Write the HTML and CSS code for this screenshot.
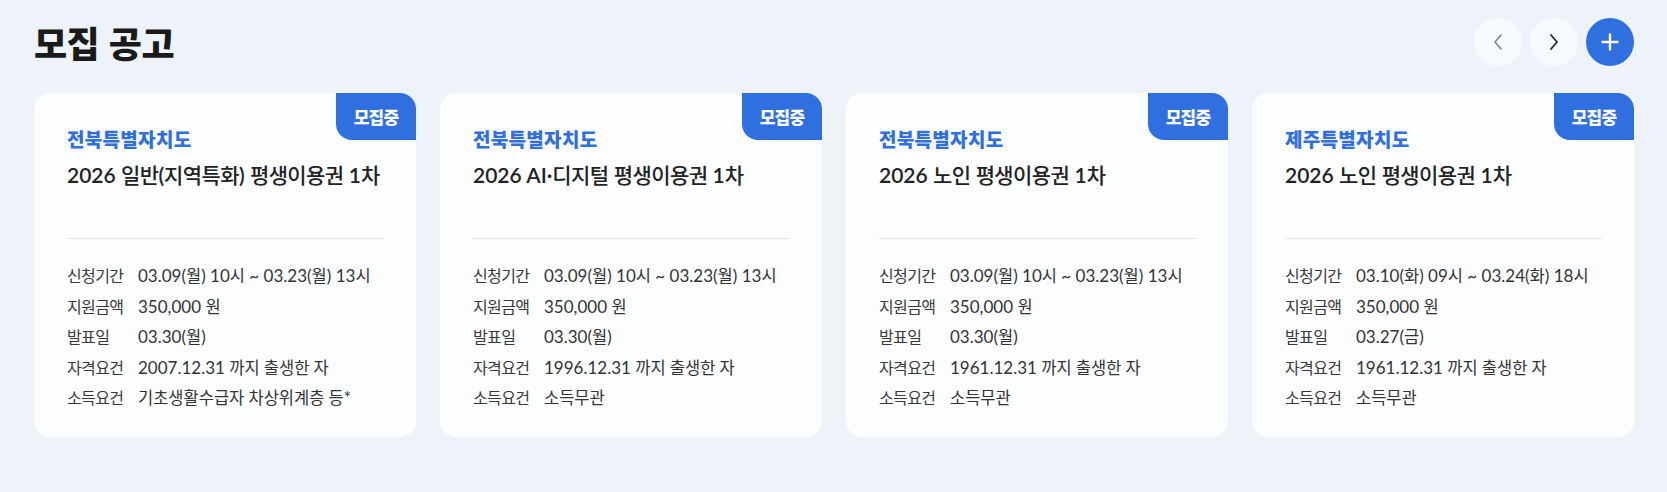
FILE: index.html
```html
<!DOCTYPE html>
<html lang="ko">
<head>
<meta charset="utf-8">
<title>모집 공고</title>
<link rel="stylesheet" href="styles.css">
</head>
<body>
<main class="page">
  <header class="head">
    <h1 class="head-title">모집 공고</h1>
    <div class="head-actions">
      <button class="circle-btn nav-btn is-disabled" aria-label="이전">
        <svg width="14" height="18" viewBox="0 0 14 18"><path d="M10 2 L4 9 L10 16" fill="none" stroke="#80858d" stroke-width="1.6" stroke-linecap="round" stroke-linejoin="round"/></svg>
      </button>
      <button class="circle-btn nav-btn" aria-label="다음">
        <svg width="14" height="18" viewBox="0 0 14 18"><path d="M4 2 L10 9 L4 16" fill="none" stroke="#1e2740" stroke-width="1.8" stroke-linecap="round" stroke-linejoin="round"/></svg>
      </button>
      <button class="circle-btn add-btn" aria-label="추가">
        <svg width="20" height="20" viewBox="0 0 20 20"><path d="M10 2.5 V17.5 M2.5 10 H17.5" fill="none" stroke="#fff" stroke-width="2.4" stroke-linecap="round"/></svg>
      </button>
    </div>
  </header>

  <section class="cards">
    <article class="card">
      <span class="badge">모집중</span>
      <p class="region">전북특별자치도</p>
      <h2 class="card-title">2026 <span class="k">일반</span>(<span class="k">지역특화</span>) <span class="k">평생이용권</span> 1<span class="k">차</span></h2>
      <hr class="divider">
      <dl class="info">
        <div class="row"><dt>신청기간</dt><dd>03.09(<span class="k">월</span>) 10<span class="k">시</span> ~ 03.23(<span class="k">월</span>) 13<span class="k">시</span></dd></div>
        <div class="row"><dt>지원금액</dt><dd>350,000 <span class="k">원</span></dd></div>
        <div class="row"><dt>발표일</dt><dd>03.30(<span class="k">월</span>)</dd></div>
        <div class="row"><dt>자격요건</dt><dd>2007.12.31 <span class="k">까지 출생한 자</span></dd></div>
        <div class="row"><dt>소득요건</dt><dd><span class="k">기초생활수급자 차상위계층 등</span>*</dd></div>
      </dl>
    </article>

    <article class="card">
      <span class="badge">모집중</span>
      <p class="region">전북특별자치도</p>
      <h2 class="card-title">2026 AI·<span class="k">디지털</span> <span class="k">평생이용권</span> 1<span class="k">차</span></h2>
      <hr class="divider">
      <dl class="info">
        <div class="row"><dt>신청기간</dt><dd>03.09(<span class="k">월</span>) 10<span class="k">시</span> ~ 03.23(<span class="k">월</span>) 13<span class="k">시</span></dd></div>
        <div class="row"><dt>지원금액</dt><dd>350,000 <span class="k">원</span></dd></div>
        <div class="row"><dt>발표일</dt><dd>03.30(<span class="k">월</span>)</dd></div>
        <div class="row"><dt>자격요건</dt><dd>1996.12.31 <span class="k">까지 출생한 자</span></dd></div>
        <div class="row"><dt>소득요건</dt><dd><span class="k">소득무관</span></dd></div>
      </dl>
    </article>

    <article class="card">
      <span class="badge">모집중</span>
      <p class="region">전북특별자치도</p>
      <h2 class="card-title">2026 <span class="k">노인</span> <span class="k">평생이용권</span> 1<span class="k">차</span></h2>
      <hr class="divider">
      <dl class="info">
        <div class="row"><dt>신청기간</dt><dd>03.09(<span class="k">월</span>) 10<span class="k">시</span> ~ 03.23(<span class="k">월</span>) 13<span class="k">시</span></dd></div>
        <div class="row"><dt>지원금액</dt><dd>350,000 <span class="k">원</span></dd></div>
        <div class="row"><dt>발표일</dt><dd>03.30(<span class="k">월</span>)</dd></div>
        <div class="row"><dt>자격요건</dt><dd>1961.12.31 <span class="k">까지 출생한 자</span></dd></div>
        <div class="row"><dt>소득요건</dt><dd><span class="k">소득무관</span></dd></div>
      </dl>
    </article>

    <article class="card">
      <span class="badge">모집중</span>
      <p class="region">제주특별자치도</p>
      <h2 class="card-title">2026 <span class="k">노인</span> <span class="k">평생이용권</span> 1<span class="k">차</span></h2>
      <hr class="divider">
      <dl class="info">
        <div class="row"><dt>신청기간</dt><dd>03.10(<span class="k">화</span>) 09<span class="k">시</span> ~ 03.24(<span class="k">화</span>) 18<span class="k">시</span></dd></div>
        <div class="row"><dt>지원금액</dt><dd>350,000 <span class="k">원</span></dd></div>
        <div class="row"><dt>발표일</dt><dd>03.27(<span class="k">금</span>)</dd></div>
        <div class="row"><dt>자격요건</dt><dd>1961.12.31 <span class="k">까지 출생한 자</span></dd></div>
        <div class="row"><dt>소득요건</dt><dd><span class="k">소득무관</span></dd></div>
      </dl>
    </article>
  </section>
</main>
</body>
</html>
```

FILE: styles.css
```css
* { box-sizing: border-box; }

html, body {
  margin: 0;
  padding: 0;
  background: #eef3f9;
}

body {
  font-family: Lato, "Noto Sans CJK KR", sans-serif;
  color: #222;
}

.page {
  padding: 18px 33px 0 34px;
}

.head {
  display: flex;
  align-items: center;
  justify-content: space-between;
  height: 48px;
}

.head-title {
  margin: 0;
  font-family: "Noto Sans CJK KR", sans-serif;
  font-size: 36px;
  font-weight: 900;
  letter-spacing: -0.5px;
  color: #1a1a1a;
  line-height: 48px;
}

.head-actions {
  display: flex;
  gap: 8px;
}

.circle-btn {
  width: 48px;
  height: 48px;
  border-radius: 50%;
  border: 0;
  padding: 0;
  display: flex;
  align-items: center;
  justify-content: center;
  cursor: pointer;
}

.nav-btn { background: #f6f9fd; }
.add-btn { background: #2f6fe0; }

.cards {
  margin-top: 27px;
  display: grid;
  grid-template-columns: repeat(4, 1fr);
  gap: 24px;
}

.card {
  position: relative;
  height: 344px;
  background: #fcfdff;
  border-radius: 16px;
  padding: 33px 32px 0 33px;
}

.badge {
  position: absolute;
  top: 0;
  right: 0;
  width: 80px;
  height: 47px;
  background: #2f6fe0;
  color: #fff;
  border-radius: 0 16px 0 16px;
  display: flex;
  align-items: center;
  justify-content: center;
  font-family: "Noto Sans CJK KR", sans-serif;
  font-size: 17px;
  font-weight: 900;
  letter-spacing: -0.8px;
}

.region {
  margin: 0;
  font-family: "Noto Sans CJK KR", sans-serif;
  font-size: 19px;
  line-height: 26px;
  font-weight: 900;
  letter-spacing: 0.3px;
  color: #2f6fe0;
}

.card-title {
  margin: 9px 0 0;
  font-size: 21px;
  line-height: 28px;
  min-height: 56px;
  font-weight: 600;
  color: #222;
}

.card-title .k {
  font-weight: 500;
  letter-spacing: -0.6px;
}

.divider {
  margin: 21px 0 0;
  border: 0;
  border-top: 1px solid #e2e5ea;
}

.info {
  margin: 22px 0 0;
}

.row {
  display: flex;
  font-size: 17px;
  line-height: 29.5px;
  color: #333;
}

.row dt {
  width: 71px;
  flex: none;
  font-size: 16px;
  letter-spacing: -0.6px;
  color: #3a3a3a;
}

.row dd {
  margin: 0;
}

.row .k {
  font-size: 16.5px;
  letter-spacing: 0;
}
```
